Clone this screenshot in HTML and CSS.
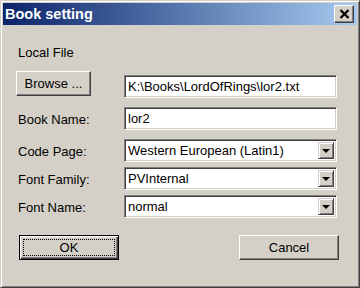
FILE: index.html
```html
<!DOCTYPE html>
<html lang="en">
<head>
    <meta charset="UTF-8">
    <title>Book setting</title>
    <link rel="stylesheet" href="styles.css">
</head>
<body>

    <div class="dialog">
        <!-- Title bar -->
        <div class="title-bar">
            <span class="title">Book setting</span>
            <span class="close-btn">
                <svg width="11" height="10" viewBox="0 0 11 10">
                    <path d="M1.5 1L9.5 9M9.5 1L1.5 9" stroke="#000" stroke-width="2.2" fill="none"/>
                </svg>
            </span>
        </div>

        <!-- Form -->
        <div class="content">
            <div class="row row-local">Local File</div>

            <div class="row row-browse">
                <div class="label-col"><span class="btn browse-btn">Browse ...</span></div>
                <div class="field">K:\Books\LordOfRings\lor2.txt</div>
            </div>

            <div class="row row-book">
                <div class="label-col">Book Name:</div>
                <div class="field">lor2</div>
            </div>

            <div class="row row-code">
                <div class="label-col">Code Page:</div>
                <div class="field combo">
                    <span class="combo-text">Western European (Latin1)</span>
                    <span class="combo-arrow"><i></i></span>
                </div>
            </div>

            <div class="row row-tight">
                <div class="label-col">Font Family:</div>
                <div class="field combo">
                    <span class="combo-text">PVInternal</span>
                    <span class="combo-arrow"><i></i></span>
                </div>
            </div>

            <div class="row row-tight">
                <div class="label-col">Font Name:</div>
                <div class="field combo">
                    <span class="combo-text">normal</span>
                    <span class="combo-arrow"><i></i></span>
                </div>
            </div>

            <div class="button-row">
                <span class="btn default-btn"><span class="focus">OK</span></span>
                <span class="btn cancel-btn">Cancel</span>
            </div>
        </div>
    </div>

</body>
</html>
```

FILE: styles.css
```css
body {
    margin: 0;
    padding: 0;
    font-family: "Liberation Sans", Arial, sans-serif;
    font-size: 13px;
    color: #000;
    background: #d4d0c8;
}

.dialog {
    width: 360px;
    height: 288px;
    box-sizing: border-box;
    background: #d4d0c8;
    border-top: 1px solid #d4d0c8;
    border-left: 1px solid #d4d0c8;
    border-right: 1px solid #404040;
    border-bottom: 1px solid #404040;
    box-shadow: inset 1px 1px 0 #fff, inset -1px -1px 0 #808080;
    padding: 2px;
}

.title-bar {
    height: 22px;
    display: flex;
    align-items: center;
    justify-content: space-between;
    padding: 0 3px 0 2px;
    background: linear-gradient(to right, #0a246a, #a6caf0);
}

.title {
    color: #fff;
    font-weight: bold;
    font-size: 14.5px;
}

.close-btn {
    width: 20px;
    height: 18px;
    box-sizing: border-box;
    display: flex;
    align-items: center;
    justify-content: center;
    background: #d4d0c8;
    border-top: 1px solid #fff;
    border-left: 1px solid #fff;
    border-right: 1px solid #404040;
    border-bottom: 1px solid #404040;
    box-shadow: inset -1px -1px 0 #808080;
}

.content {
    padding: 0 20px 0 15px;
}

.row {
    display: flex;
    align-items: center;
    height: 23px;
}

.row-local {
    margin-top: 20px;
    height: 15px;
}

.row-browse {
    margin-top: 12px;
    height: 26px;
}

.row-book,
.row-code {
    margin-top: 9px;
}

.row-tight {
    margin-top: 5px;
}

.label-col {
    width: 106px;
    flex-shrink: 0;
    padding-top: 1px;
}

.field {
    flex: 1;
    height: 23px;
    box-sizing: border-box;
    background: #fff;
    border-top: 1px solid #808080;
    border-left: 1px solid #808080;
    border-right: 1px solid #fff;
    border-bottom: 1px solid #fff;
    box-shadow: inset 1px 1px 0 #404040, inset -1px -1px 0 #d4d0c8;
    padding: 0 3px;
    display: flex;
    align-items: center;
    white-space: nowrap;
}

.row-browse .field {
    align-self: flex-end;
}

.combo {
    padding-right: 2px;
    justify-content: space-between;
}

.combo-arrow {
    width: 16px;
    height: 17px;
    box-sizing: border-box;
    display: flex;
    align-items: center;
    justify-content: center;
    background: #d4d0c8;
    border-top: 1px solid #d4d0c8;
    border-left: 1px solid #d4d0c8;
    border-right: 1px solid #404040;
    border-bottom: 1px solid #404040;
    box-shadow: inset 1px 1px 0 #fff, inset -1px -1px 0 #808080;
}

.combo-arrow i {
    width: 0;
    height: 0;
    border-left: 4px solid transparent;
    border-right: 4px solid transparent;
    border-top: 4px solid #000;
}

.btn {
    display: flex;
    align-items: center;
    justify-content: center;
    box-sizing: border-box;
    background: #d4d0c8;
    border-top: 1px solid #fff;
    border-left: 1px solid #fff;
    border-right: 1px solid #404040;
    border-bottom: 1px solid #404040;
    box-shadow: inset -1px -1px 0 #808080;
}

.browse-btn {
    width: 75px;
    height: 25px;
    margin-left: -2px;
    margin-top: -1px;
    align-self: flex-start;
}

.row-browse .label-col {
    align-self: flex-start;
    padding-top: 0;
}

.button-row {
    display: flex;
    justify-content: space-between;
    margin-top: 17px;
    padding-left: 1px;
}

.default-btn,
.cancel-btn {
    width: 100px;
    height: 25px;
}

.default-btn {
    border: 1px solid #000;
    box-shadow: inset 1px 1px 0 #fff, inset -1px -1px 0 #404040, inset -2px -2px 0 #808080;
    padding: 3px;
}

.focus {
    flex: 1;
    align-self: stretch;
    display: flex;
    align-items: center;
    justify-content: center;
    border: 1px dotted #000;
}

.cancel-btn {
    margin-right: -2px;
}
```
